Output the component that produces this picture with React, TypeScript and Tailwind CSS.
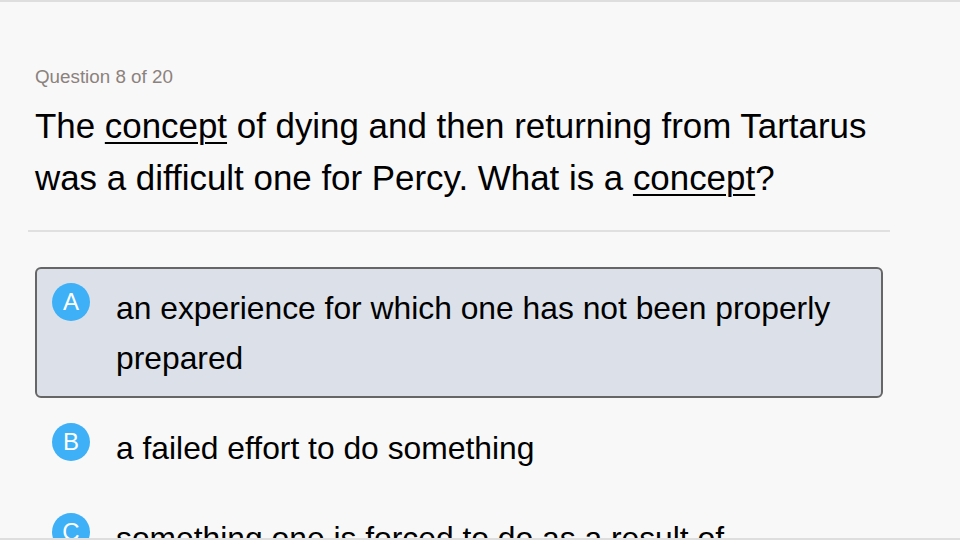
const options = [
  { letter: "A", text: "an experience for which one has not been properly prepared" },
  { letter: "B", text: "a failed effort to do something" },
  { letter: "C", text: "something one is forced to do as a result of circumstances" },
];

const SELECTED = "A";

export default function App() {
  return (
    <div
      className="h-[540px] w-[960px] overflow-hidden border-t-2 border-b-2 border-[#dedede] bg-[#f8f8f8] text-black"
      style={{ fontFamily: '"Liberation Sans", Arial, sans-serif' }}
    >
      <div className="pl-[28px] pr-[70px] pt-[63px]">
        <div className="pl-[7px]">
          <p className="text-[18.8px] leading-[24px] text-[#8c827d]">Question 8 of 20</p>
          <p className="mt-[11px] text-[34.9px] leading-[52px] pr-[10px]">
            The <span className="underline underline-offset-[4px] decoration-[1.5px]">concept</span> of dying and then
            returning from Tartarus was a difficult one for Percy. What is a{" "}
            <span className="underline underline-offset-[4px] decoration-[1.5px]">concept</span>?
          </p>
        </div>
        <div className="mt-[26px] h-[2px] bg-[#e0e0e0]" />
        <div className="mt-[35px] flex flex-col gap-[9px] pl-[7px] pr-[7px]">
          {options.map((o) => (
            <div
              key={o.letter}
              className={
                "flex items-start gap-[26px] rounded-[6px] border-2 pl-[15px] pr-[20px] pt-[14px] pb-[13px] " +
                (o.letter === SELECTED ? "border-[#666666] bg-[#dce1e9]" : "border-transparent")
              }
            >
              <span className="flex h-[38px] w-[38px] shrink-0 items-center justify-center rounded-full bg-[#3db0f7] text-[24px] font-light text-white">
                {o.letter}
              </span>
              <span className="text-[31.8px] leading-[50px]">{o.text}</span>
            </div>
          ))}
        </div>
      </div>
    </div>
  );
}
